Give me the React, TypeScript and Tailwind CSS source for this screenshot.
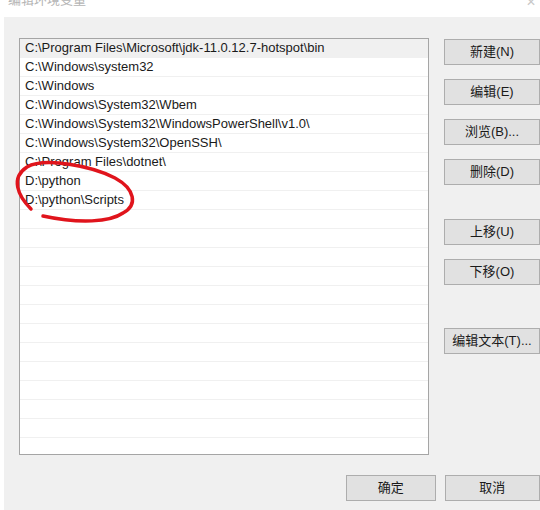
const paths = [
  "C:\\Program Files\\Microsoft\\jdk-11.0.12.7-hotspot\\bin",
  "C:\\Windows\\system32",
  "C:\\Windows",
  "C:\\Windows\\System32\\Wbem",
  "C:\\Windows\\System32\\WindowsPowerShell\\v1.0\\",
  "C:\\Windows\\System32\\OpenSSH\\",
  "C:\\Program Files\\dotnet\\",
  "D:\\python",
  "D:\\python\\Scripts",
];

const emptyRows = Array.from({ length: 14 }, (_, i) => i);

function Btn({ label, className = "" }: { label: string; className?: string }) {
  return (
    <div
      className={`flex h-[26px] items-center justify-center border border-[#adadad] bg-[#e1e1e1] text-[13px] text-[#1a1a1a] ${className}`}
    >
      {label}
    </div>
  );
}

export default function App() {
  return (
    <div
      className="relative h-[510px] w-[540px] overflow-hidden bg-white"
      style={{ fontFamily: '"Liberation Sans", "Noto Sans CJK SC", sans-serif' }}
    >
      {/* title bar */}
      <div className="flex h-[17px] items-end justify-between">
        <span className="relative top-[-8px] ml-[8px] text-[13px] text-[#b4b4b4]">编辑环境变量</span>
        <span className="relative top-[-6px] mr-[4px] text-[12px] text-[#c8c8c8]">✕</span>
      </div>

      <div className="ml-[4px] flex h-[493px] flex-col bg-[#f0f0f0]">
        <div className="mt-[21px] flex">
          {/* list */}
          <div className="ml-[15px] h-[417px] w-[411px] overflow-hidden border border-[#a5a5a5] bg-white">
            {paths.map((p, i) => (
              <div
                key={p}
                className={`flex h-[19px] items-center border-b border-[#f0f0f0] pl-[5px] text-[13px] text-[#1a1a1a] ${
                  i === 0 ? "bg-[#f0f0f0]" : ""
                }`}
              >
                {p}
              </div>
            ))}
            {emptyRows.map((i) => (
              <div key={i} className="h-[19px] border-b border-[#f0f0f0]" />
            ))}
          </div>

          {/* side buttons */}
          <div className="ml-[15px] mt-[1px] flex flex-col">
            <Btn label="新建(N)" className="w-[96px]" />
            <Btn label="编辑(E)" className="mt-[14px] w-[96px]" />
            <Btn label="浏览(B)..." className="mt-[14px] w-[96px]" />
            <Btn label="删除(D)" className="mt-[14px] w-[96px]" />
            <Btn label="上移(U)" className="mt-[34px] w-[96px]" />
            <Btn label="下移(O)" className="mt-[14px] w-[96px]" />
            <Btn label="编辑文本(T)..." className="mt-[43px] w-[96px]" />
          </div>
        </div>

        <div className="mt-[20px] flex">
          <Btn label="确定" className="ml-[342px] w-[90px]" />
          <Btn label="取消" className="ml-[9px] w-[96px]" />
        </div>
      </div>

      {/* red hand-drawn circle */}
      <svg className="pointer-events-none absolute left-0 top-0" width="540" height="510">
        <path
          d="M31 209 C 18 196, 10 178, 27 167 C 45 157, 92 166, 115 178 C 135 189, 138 205, 123 213 C 110 222, 80 224, 43 216"
          fill="none"
          stroke="#e0141c"
          strokeWidth="3.5"
          strokeLinecap="round"
        />
      </svg>
    </div>
  );
}
